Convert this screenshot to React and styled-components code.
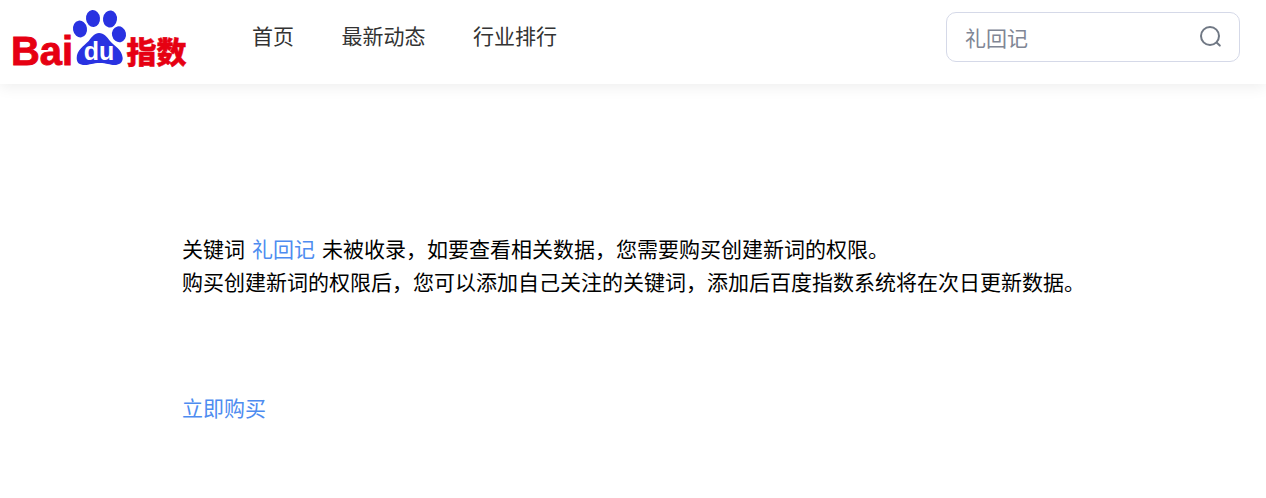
import React from "react"
import styled, { createGlobalStyle } from "styled-components"

const GlobalStyle = createGlobalStyle`
  html, body {
    margin: 0;
    padding: 0;
    background: #fff;
  }
  body {
    font-family: "Liberation Sans", "Noto Sans CJK SC", sans-serif;
    font-size: 21px;
    color: #000;
  }
`

const Header = styled.header`
  height: 84px;
  display: flex;
  align-items: center;
  padding: 0 26px 0 12px;
  background: #fff;
  box-shadow: 0 3px 14px rgba(0, 0, 0, 0.07);
`

const LogoMark = styled.svg`
  display: block;
  width: 176px;
  height: 68px;
  flex-shrink: 0;
`

const Nav = styled.nav`
  display: flex;
  gap: 47.5px;
  margin-left: 64px;
  margin-top: -10px;
  flex-grow: 1;
`

const NavLink = styled.a`
  color: #333;
  line-height: 30px;
  font-size: 21px;
  cursor: pointer;
`

const SearchBox = styled.label`
  box-sizing: border-box;
  width: 294px;
  height: 50px;
  display: flex;
  align-items: center;
  padding: 0 16px 0 18px;
  border: 1px solid #d5d9e8;
  border-radius: 10px;
  margin-top: -10px;
`

const SearchInput = styled.input`
  flex: 1 1 0;
  width: 0;
  min-width: 0;
  border: 0;
  outline: 0;
  padding: 0;
  background: transparent;
  font: inherit;
  font-size: 21px;
  color: #808695;
`

const SearchGlyph = styled.svg`
  display: block;
  flex-shrink: 0;
  width: 24px;
  height: 24px;
`

const Main = styled.main`
  padding: 149px 0 0 182px;
`

const Notice = styled.p`
  margin: 0;
  line-height: 33px;
  font-size: 21px;
  word-spacing: 1.2px;
`

const Accent = styled.a`
  color: #4e8cf0;
  cursor: pointer;
`

const BuyRow = styled.div`
  margin-top: 93px;
  line-height: 33px;
`

const Logo = () => (
  <LogoMark viewBox="0 0 176 68" aria-label="百度指数">
    <text
      x="-1"
      y="56.5"
      fill="#e60012"
      stroke="#e60012"
      strokeWidth="0.9"
      fontFamily="'Liberation Sans', sans-serif"
      fontWeight="700"
      fontSize="40"
      textLength="62"
      lengthAdjust="spacingAndGlyphs"
    >
      Bai
    </text>
    <g fill="#2932e1">
      <ellipse cx="68" cy="21" rx="7" ry="8.5" transform="rotate(-10 68 21)" />
      <ellipse cx="81" cy="10.5" rx="7" ry="8.5" transform="rotate(-6 81 10.5)" />
      <ellipse cx="98" cy="11" rx="7" ry="8.5" transform="rotate(8 98 11)" />
      <ellipse cx="107" cy="26.3" rx="7" ry="8" transform="rotate(-12 107 26.3)" />
      <path d="M87 25c5 0 8 4 11 8 4 5 12 8 12.7 17 0 5-4 7-8 7-5 0-8-2-15-2-7 0-10 2-15 2-5 0-8-2-8-7 0-8 7-12 12-17 3-4 6-8 10.3-8z" />
    </g>
    <text
      x="87"
      y="51.5"
      textAnchor="middle"
      fill="#fff"
      fontFamily="'Liberation Sans', sans-serif"
      fontWeight="700"
      fontSize="25"
    >
      du
    </text>
    <text
      x="114.5"
      y="54.5"
      fill="#e60012"
      stroke="#e60012"
      strokeWidth="0.5"
      fontFamily="'Noto Sans CJK SC', sans-serif"
      fontWeight="900"
      fontSize="30"
    >
      指数
    </text>
  </LogoMark>
)

const SearchIcon = () => (
  <SearchGlyph viewBox="0 0 24 24" fill="none" stroke="#707884" strokeWidth="2" strokeLinecap="round">
    <circle cx="11" cy="11" r="9" />
    <path d="M17.6 17.6l3.2 3" />
  </SearchGlyph>
)

export default function App() {
  return (
    <>
      <GlobalStyle />
      <Header>
        <Logo />
        <Nav>
          <NavLink>首页</NavLink>
          <NavLink>最新动态</NavLink>
          <NavLink>行业排行</NavLink>
        </Nav>
        <SearchBox>
          <SearchInput defaultValue="礼回记" />
          <SearchIcon />
        </SearchBox>
      </Header>
      <Main>
        <Notice>
          关键词 <Accent>礼回记</Accent> 未被收录，如要查看相关数据，您需要购买创建新词的权限。
          <br />
          购买创建新词的权限后，您可以添加自己关注的关键词，添加后百度指数系统将在次日更新数据。
        </Notice>
        <BuyRow>
          <Accent>立即购买</Accent>
        </BuyRow>
      </Main>
    </>
  )
}
